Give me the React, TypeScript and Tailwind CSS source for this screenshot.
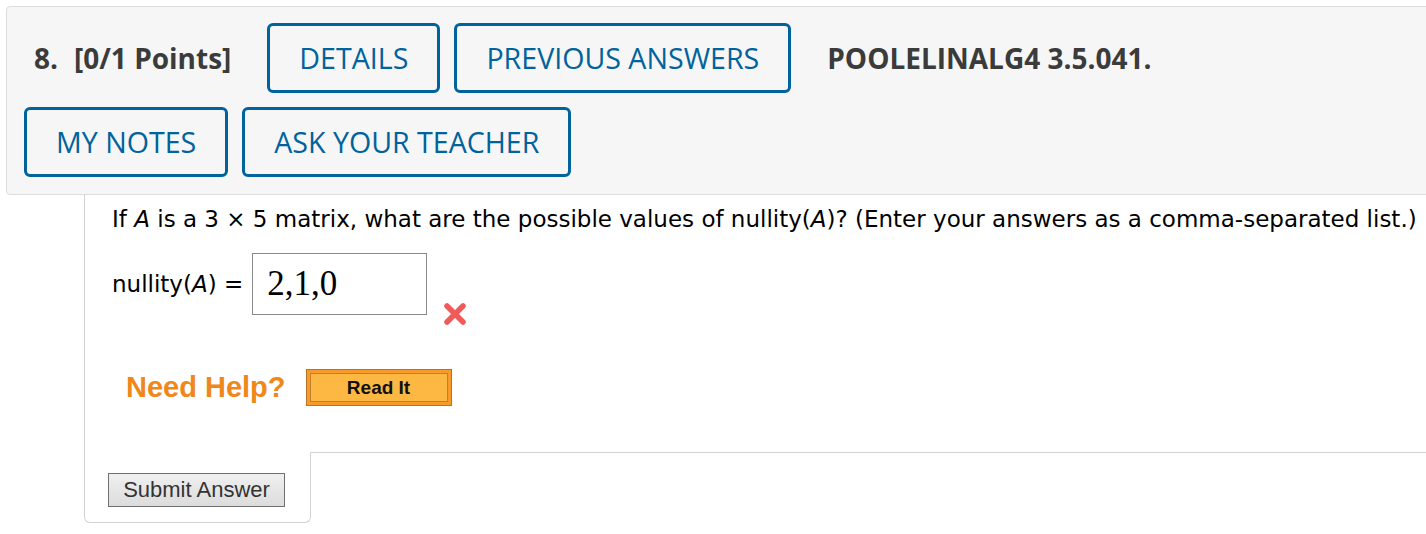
import React from "react";

const btn =
  "h-[70px] px-[29px] border-[3px] border-[#00639c] rounded-[6px] text-[28.6px] text-[#00639c] flex items-center justify-center leading-none bg-transparent";

export default function App() {
  return (
    <div className="w-[1426px] h-[534px] bg-white overflow-hidden relative">
      {/* header */}
      <div
        className="mt-[6px] ml-[6px] w-[1440px] border border-[#dcdcdc] bg-[#f6f6f6] rounded-[4px] pt-[16px] pb-[17px] pl-[17px] flex flex-col gap-[14px]"
        style={{ fontFamily: '"Open Sans", sans-serif' }}
      >
        <div className="flex items-center">
          <span className="ml-[10px] text-[28px] font-bold text-[#3b3b3b]">8.</span>
          <span className="ml-[16px] text-[28px] font-bold text-[#3b3b3b]">[0/1 Points]</span>
          <button className={btn + " ml-[36px]"}>DETAILS</button>
          <button className={btn + " ml-[14px]"}>PREVIOUS ANSWERS</button>
          <span className="ml-[36px] text-[28px] font-bold text-[#3b3b3b]">POOLELINALG4 3.5.041.</span>
        </div>
        <div className="flex items-center gap-[14px]">
          <button className={btn}>MY NOTES</button>
          <button className={btn}>ASK YOUR TEACHER</button>
        </div>
      </div>

      {/* content */}
      <div className="ml-[84px] w-[1400px]">
        <div
          className="border-l border-[#d2d2d2] pl-[27px] pt-[9px] h-[257px] text-black"
          style={{ fontFamily: '"DejaVu Sans", Verdana, sans-serif' }}
        >
          <p className="text-[23px] leading-[30px] whitespace-nowrap">
            If <i>A</i> is a 3 × 5 matrix, what are the possible values of nullity(<i>A</i>)? (Enter your answers as a
            comma-separated list.)
          </p>
          <div className="flex items-start mt-[19px]">
            <span className="text-[23px] leading-[30px] mt-[16px] whitespace-nowrap">
              nullity(<i>A</i>) =
            </span>
            <div
              className="ml-[9px] w-[175px] h-[62px] border border-[#8a8a8a] bg-white pl-[14px] text-[35px] leading-[60px] text-black"
              style={{ fontFamily: '"Liberation Serif", "Times New Roman", serif' }}
            >
              2,1,0
            </div>
            <svg className="ml-[16px] mt-[50px]" width="24" height="22" viewBox="0 0 24 22">
              <path d="M4 3 L20 19 M20 3 L4 19" stroke="#f25a5a" strokeWidth="5.5" strokeLinecap="round" />
            </svg>
          </div>
          <div className="flex items-center mt-[44px] ml-[14px]">
            <span
              className="text-[29px] font-bold text-[#f0871a] leading-none"
              style={{ fontFamily: '"Liberation Sans", Arial, sans-serif' }}
            >
              Need Help?
            </span>
            <div className="ml-[20px] w-[146px] h-[37px] bg-[#f79a2a] border border-[#b8732a] p-[3px]">
              <div className="w-full h-full bg-[#fdb844] border border-[#c47f2c] flex items-center justify-center">
                <span
                  className="text-[19px] font-bold text-[#111] leading-none"
                  style={{ fontFamily: '"Liberation Sans", Arial, sans-serif' }}
                >
                  Read It
                </span>
              </div>
            </div>
          </div>
        </div>
        <div className="flex">
          <div className="w-[227px] border-l border-b border-r border-[#d2d2d2] rounded-b-[6px] pl-[23px] pt-[21px] pb-[15px]">
            <button
              className="w-[177px] h-[34px] border border-[#707070] bg-gradient-to-b from-[#f0f0f0] to-[#dcdcdc] text-[22px] text-[#333] leading-none flex items-center justify-center"
              style={{ fontFamily: '"Liberation Sans", Arial, sans-serif' }}
            >
              Submit Answer
            </button>
          </div>
          <div className="flex-1 border-t border-[#d2d2d2]"></div>
        </div>
      </div>
    </div>
  );
}
